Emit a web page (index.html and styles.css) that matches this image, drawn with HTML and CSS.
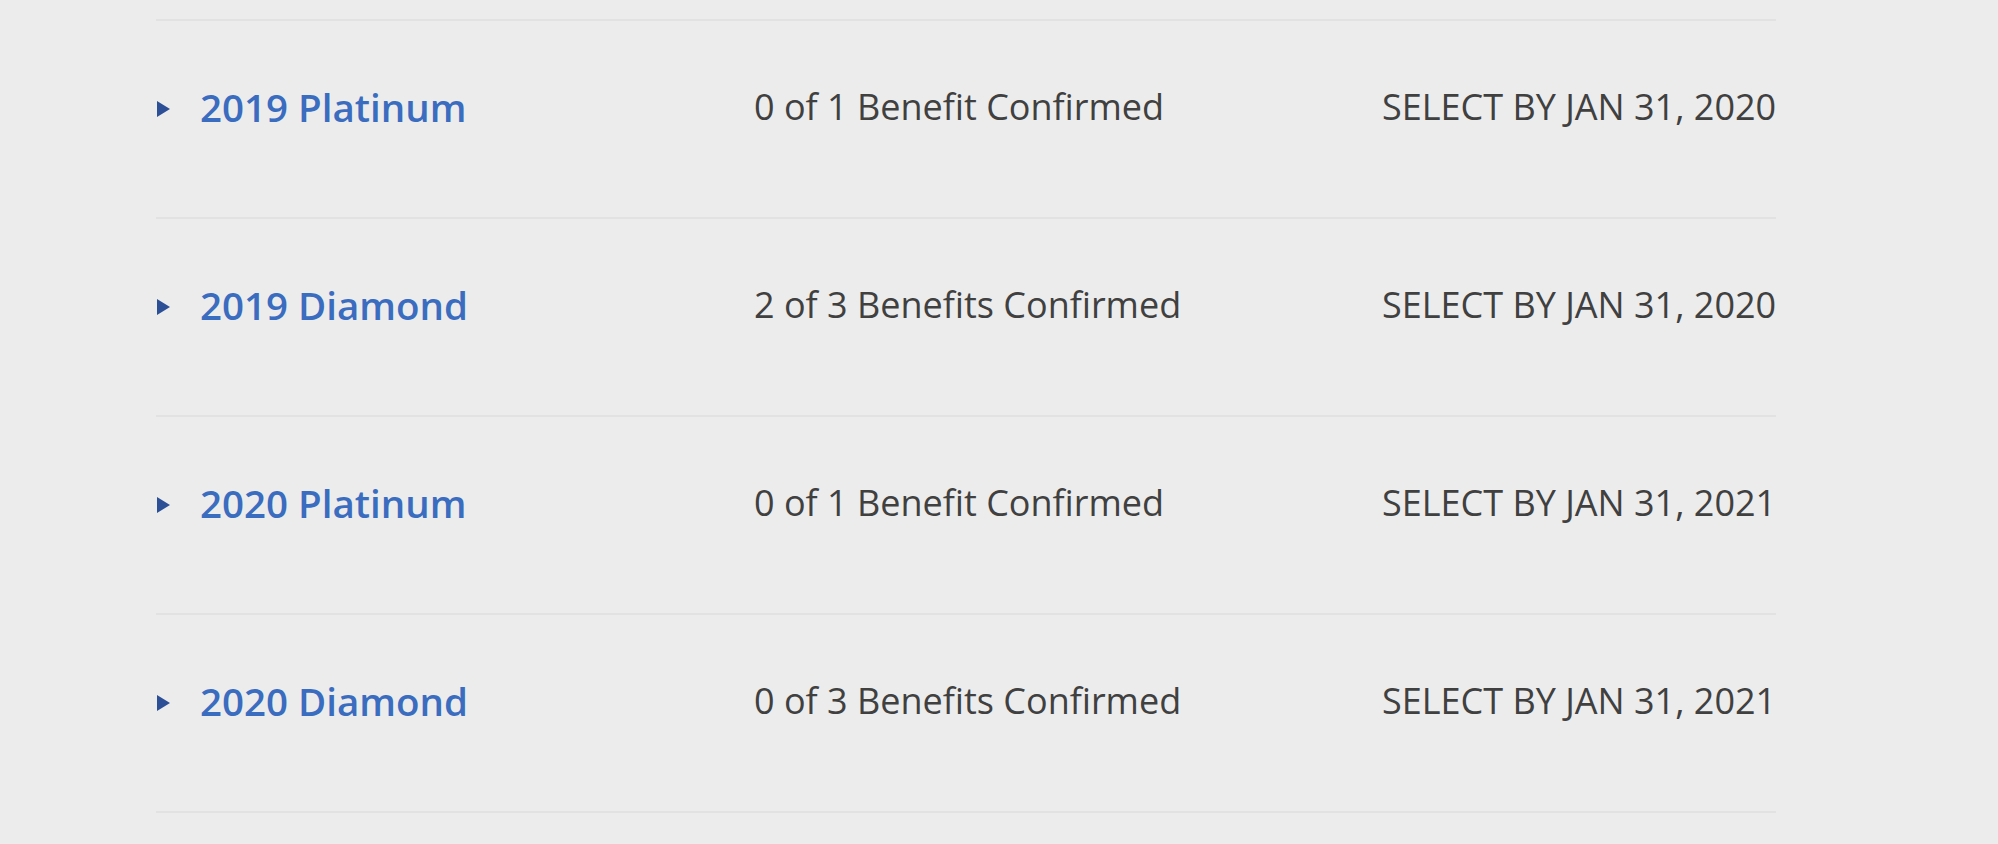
FILE: index.html
```html
<!DOCTYPE html>
<html lang="en">
<head>
<meta charset="utf-8">
<title>Benefits</title>
<link rel="stylesheet" href="styles.css">
</head>
<body>
<div class="list">
  <div class="row">
    <span class="caret"><svg width="44" height="56" viewBox="0 0 44 56"><path d="M1 23 L14 31 L1 39 Z" fill="#2c4f96"/></svg></span>
    <a class="title" href="#">2019 Platinum</a>
    <span class="status">0 of 1 Benefit Confirmed</span>
    <span class="deadline">SELECT BY JAN 31, 2020</span>
  </div>
  <div class="row">
    <span class="caret"><svg width="44" height="56" viewBox="0 0 44 56"><path d="M1 23 L14 31 L1 39 Z" fill="#2c4f96"/></svg></span>
    <a class="title" href="#">2019 Diamond</a>
    <span class="status">2 of 3 Benefits Confirmed</span>
    <span class="deadline">SELECT BY JAN 31, 2020</span>
  </div>
  <div class="row">
    <span class="caret"><svg width="44" height="56" viewBox="0 0 44 56"><path d="M1 23 L14 31 L1 39 Z" fill="#2c4f96"/></svg></span>
    <a class="title" href="#">2020 Platinum</a>
    <span class="status">0 of 1 Benefit Confirmed</span>
    <span class="deadline">SELECT BY JAN 31, 2021</span>
  </div>
  <div class="row">
    <span class="caret"><svg width="44" height="56" viewBox="0 0 44 56"><path d="M1 23 L14 31 L1 39 Z" fill="#2c4f96"/></svg></span>
    <a class="title" href="#">2020 Diamond</a>
    <span class="status">0 of 3 Benefits Confirmed</span>
    <span class="deadline">SELECT BY JAN 31, 2021</span>
  </div>
</div>
</body>
</html>
```
FILE: styles.css
```css
html, body {
  margin: 0;
  padding: 0;
  background: #ececec;
  font-family: "Open Sans", "Noto Sans", sans-serif;
}
.list {
  margin: 19px 0 0 156px;
  width: 1620px;
  border-top: 2px solid #e2e2e2;
}
.row {
  display: grid;
  grid-template-columns: 44px 554px 628px 1fr;
  align-items: start;
  height: 198px;
  box-sizing: border-box;
  padding-top: 57px;
  border-bottom: 2px solid #e2e2e2;
}
.caret {
  display: block;
  height: 56px;
}
.caret svg {
  display: block;
}
.title {
  font-size: 38.5px;
  line-height: 56px;
  font-weight: 600;
  color: #3a6cc0;
  text-decoration: none;
  margin-top: 1px;
  white-space: nowrap;
}
.status, .deadline {
  font-size: 36px;
  line-height: 50px;
  color: #404040;
  margin-top: 4px;
  white-space: nowrap;
}
```
